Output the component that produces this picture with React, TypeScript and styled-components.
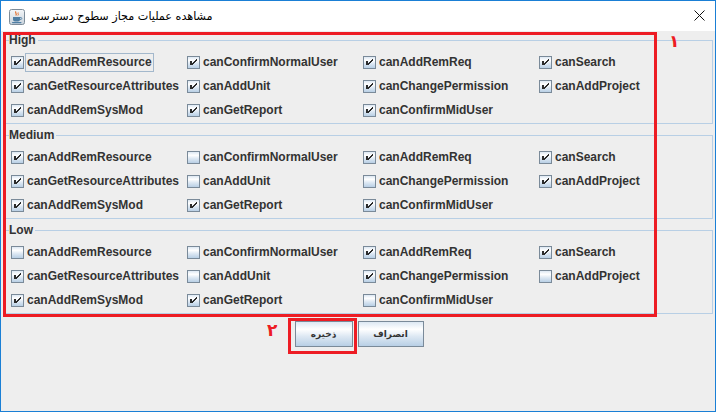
import React from 'react';
import styled, { createGlobalStyle } from 'styled-components';

const GlobalStyle = createGlobalStyle`
  html, body {
    margin: 0;
    padding: 0;
    background: #ffffff;
  }
  body {
    font-family: "Liberation Sans", Arial, sans-serif;
  }
  * {
    box-sizing: border-box;
  }
`;

const permissions = [
  'canAddRemResource',
  'canConfirmNormalUser',
  'canAddRemReq',
  'canSearch',
  'canGetResourceAttributes',
  'canAddUnit',
  'canChangePermission',
  'canAddProject',
  'canAddRemSysMod',
  'canGetReport',
  'canConfirmMidUser',
];

const levels = [
  { title: 'High', checks: [1, 1, 1, 1, 1, 1, 1, 1, 1, 1, 1] },
  { title: 'Medium', checks: [1, 0, 1, 1, 1, 0, 0, 1, 1, 1, 1] },
  { title: 'Low', checks: [0, 0, 1, 1, 1, 0, 1, 0, 1, 1, 0] },
];

const JavaIcon = () => (
  <svg width="16" height="16" viewBox="0 0 16 16">
    <defs>
      <linearGradient id="jg" x1="0" y1="0" x2="0" y2="1">
        <stop offset="0" stopColor="#f4f6f8" />
        <stop offset="1" stopColor="#c9d3dc" />
      </linearGradient>
    </defs>
    <rect x="0.5" y="0.5" width="15" height="15" rx="2" fill="url(#jg)" stroke="#7d8c99" />
    <path d="M7 2.5c-1.5 1.5 1.5 2-0.2 4" stroke="#e2641b" strokeWidth="1.1" fill="none" />
    <path d="M9.2 3.5c-1 1 1 1.4-0.3 3" stroke="#e2641b" strokeWidth="0.9" fill="none" />
    <path d="M4 8h7v2.5c0 1.2-1 2-2 2H6c-1 0-2-0.8-2-2z" fill="#4f7ea3" />
    <path d="M11 8.6h1.2c0.8 0 0.8 1.8-0.2 1.8H11" stroke="#4f7ea3" strokeWidth="0.9" fill="none" />
    <rect x="3" y="13" width="9.5" height="1.2" rx="0.6" fill="#4f7ea3" />
  </svg>
);

const CheckMark = () => (
  <svg width="13" height="13" viewBox="0 0 13 13" shapeRendering="crispEdges">
    <rect x="3" y="5" width="2" height="4" fill="#2b2b2b" />
    <path d="M9 3h1v1H9zM8 4h1v1H8zM7 5h1v1H7zM6 6h1v1H6zM5 7h1v1H5zM9 4h1v1H9zM8 5h1v1H8zM7 6h1v1H7zM6 7h1v1H6zM5 8h1v1H5z" fill="#2b2b2b" />
  </svg>
);

const App: React.FC = () => {
  return (
    <>
      <GlobalStyle />
      <Window>
        <TitleBar>
          <TitleLeft>
            <JavaIcon />
            <TitleText dir="rtl">مشاهده عملیات مجاز سطوح دسترسی</TitleText>
          </TitleLeft>
          <CloseButton>
            <svg width="11" height="11" viewBox="0 0 11 11">
              <path d="M0.5 0.5l10 10M10.5 0.5l-10 10" stroke="#111" strokeWidth="1" />
            </svg>
          </CloseButton>
        </TitleBar>

        <Content>
          {levels.map((level) => (
            <Group key={level.title}>
              <Legend>{level.title}</Legend>
              <Grid>
                {permissions.map((name, i) => (
                  <CheckItem key={name}>
                    <Box>{level.checks[i] ? <CheckMark /> : null}</Box>
                    <CheckLabel $focused={level.title === 'High' && i === 0}>{name}</CheckLabel>
                  </CheckItem>
                ))}
              </Grid>
            </Group>
          ))}

          <ButtonRow>
            <DialogButton $width={58}>ذخیره</DialogButton>
            <DialogButton $width={66}>انصراف</DialogButton>
          </ButtonRow>
        </Content>

        <MarkBox $left={2} $top={31} $width={654} $height={285} />
        <MarkBox $left={287} $top={317} $width={69} $height={36} />
        <MarkNumber $left={668} $top={30}>۱</MarkNumber>
        <MarkNumber $left={266} $top={319}>۲</MarkNumber>
      </Window>
    </>
  );
};

export default App;

const Window = styled.div`
  position: relative;
  width: 716px;
  height: 412px;
  border: 1px solid #1a7fd5;
  background: #eeeeee;
  display: flex;
  flex-direction: column;
  overflow: hidden;
`;

const TitleBar = styled.div`
  height: 30px;
  flex: none;
  background: #ffffff;
  display: flex;
  align-items: center;
  justify-content: space-between;
  padding: 0 10px 0 8px;
`;

const TitleLeft = styled.div`
  display: flex;
  align-items: center;
  gap: 6px;
  padding-top: 1px;
`;

const TitleText = styled.span`
  font-family: "DejaVu Sans", sans-serif;
  font-size: 11.2px;
  color: #000000;
`;

const CloseButton = styled.div`
  display: flex;
  align-items: center;
  margin-top: -1px;
`;

const Content = styled.div`
  flex: 1;
  padding: 2px 2px 0 4px;
  display: flex;
  flex-direction: column;
`;

const Group = styled.fieldset`
  margin: 0;
  padding: 3px 0 1px 0;
  border: 1px solid #b8cfe5;
  min-width: 0;

  & + & {
    margin-top: 4px;
  }
`;

const Legend = styled.legend`
  margin-left: 3px;
  padding: 0 2px 0 0;
  font: bold 12px/14px "Liberation Sans", Arial, sans-serif;
  color: #333333;
`;

const Grid = styled.div`
  display: grid;
  grid-template-columns: repeat(4, 176px);
  grid-auto-rows: 24px;
  padding-left: 5px;
`;

const CheckItem = styled.label`
  display: flex;
  align-items: center;
`;

const Box = styled.span`
  width: 13px;
  height: 13px;
  flex: none;
  position: relative;
  border: 1px solid #7a8a99;
  background: linear-gradient(#dde8f3 0%, #ffffff 30%, #dde8f3 60%, #b8cfe5 100%);

  svg {
    position: absolute;
    left: -1px;
    top: -1px;
  }
`;

const CheckLabel = styled.span<{ $focused?: boolean }>`
  margin-left: 1px;
  padding: 1px;
  border: 1px solid ${(p) => (p.$focused ? '#a3b8cc' : 'transparent')};
  font: bold 12px/15px "Liberation Sans", Arial, sans-serif;
  color: #333333;
  white-space: nowrap;
`;

const ButtonRow = styled.div`
  display: flex;
  justify-content: center;
  gap: 5px;
  margin-top: 7px;
`;

const DialogButton = styled.button<{ $width: number }>`
  width: ${(p) => p.$width}px;
  height: 26px;
  padding: 0;
  border: 1px solid #7a8a99;
  background: linear-gradient(#dde8f3 0%, #ffffff 30%, #dde8f3 60%, #b8cfe5 100%);
  font-family: "DejaVu Sans", sans-serif;
  font-weight: bold;
  font-size: 9px;
  color: #333333;
  direction: rtl;
`;

const MarkBox = styled.div<{ $left: number; $top: number; $width: number; $height: number }>`
  position: absolute;
  left: ${(p) => p.$left}px;
  top: ${(p) => p.$top}px;
  width: ${(p) => p.$width}px;
  height: ${(p) => p.$height}px;
  border: 3px solid #ed1c24;
  pointer-events: none;
`;

const MarkNumber = styled.span<{ $left: number; $top: number }>`
  position: absolute;
  left: ${(p) => p.$left}px;
  top: ${(p) => p.$top}px;
  font-family: "DejaVu Sans", sans-serif;
  font-weight: bold;
  font-size: 17px;
  line-height: 20px;
  color: #ed1c24;
`;
